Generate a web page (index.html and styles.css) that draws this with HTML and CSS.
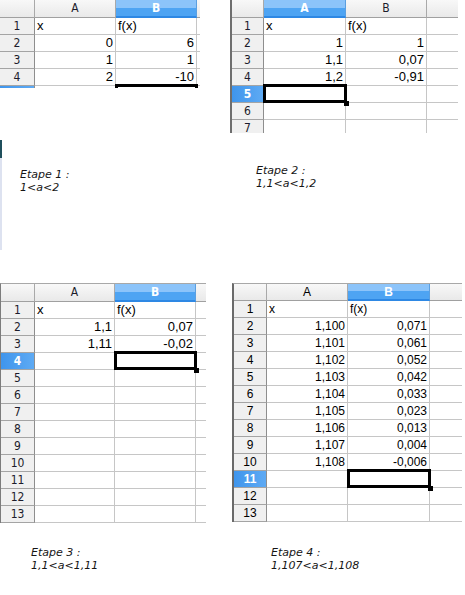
FILE: index.html
```html
<!doctype html>
<html lang="fr">
    <head>
        <meta charset="UTF-8" />
        <meta name="viewport" content="width=device-width, initial-scale=1.0" />
        <title>Dichotomie - étapes</title>
        <link rel="stylesheet" href="styles.css">
    </head>
    <body>
        <div class="board">
            <!-- Etape 1 -->
            <div class="panel">
                <div class="sheet sheet--one">
                    <div class="hd"></div><div class="hd">A</div><div class="hd hd--on">B</div><div class="hd"></div>
                    <div class="rh">1</div><div class="cell">x</div><div class="cell">f(x)</div><div class="cell"></div>
                    <div class="rh">2</div><div class="cell num">0</div><div class="cell num">6</div><div class="cell"></div>
                    <div class="rh">3</div><div class="cell num">1</div><div class="cell num">1</div><div class="cell"></div>
                    <div class="rh">4</div><div class="cell num">2</div><div class="cell num">-10</div><div class="cell"></div>
                    <div class="rh rh--on"></div><div class="cell"></div><div class="cell sel"></div><div class="cell"></div>
                </div>
                <div class="aside">
                    <span class="edge"></span>
                    <p class="note note--one">Etape 1 :<br>1&lt;a&lt;2</p>
                </div>
            </div>

            <!-- Etape 2 -->
            <div class="panel">
                <div class="sheet sheet--two">
                    <div class="hd"></div><div class="hd hd--on">A</div><div class="hd">B</div><div class="hd"></div>
                    <div class="rh">1</div><div class="cell">x</div><div class="cell">f(x)</div><div class="cell"></div>
                    <div class="rh">2</div><div class="cell num">1</div><div class="cell num">1</div><div class="cell"></div>
                    <div class="rh">3</div><div class="cell num">1,1</div><div class="cell num">0,07</div><div class="cell"></div>
                    <div class="rh">4</div><div class="cell num">1,2</div><div class="cell num">-0,91</div><div class="cell"></div>
                    <div class="rh rh--on">5</div><div class="cell sel"></div><div class="cell"></div><div class="cell"></div>
                    <div class="rh">6</div><div class="cell"></div><div class="cell"></div><div class="cell"></div>
                    <div class="rh">7</div><div class="cell"></div><div class="cell"></div><div class="cell"></div>
                </div>
                <p class="note note--two">Etape 2 :<br>1,1&lt;a&lt;1,2</p>
            </div>

            <!-- Etape 3 -->
            <div class="panel">
                <div class="sheet sheet--three">
                    <div class="hd"></div><div class="hd">A</div><div class="hd hd--on">B</div><div class="hd"></div>
                    <div class="rh">1</div><div class="cell">x</div><div class="cell">f(x)</div><div class="cell"></div>
                    <div class="rh">2</div><div class="cell num">1,1</div><div class="cell num">0,07</div><div class="cell"></div>
                    <div class="rh">3</div><div class="cell num">1,11</div><div class="cell num">-0,02</div><div class="cell"></div>
                    <div class="rh rh--on">4</div><div class="cell"></div><div class="cell sel"></div><div class="cell"></div>
                    <div class="rh">5</div><div class="cell"></div><div class="cell"></div><div class="cell"></div>
                    <div class="rh">6</div><div class="cell"></div><div class="cell"></div><div class="cell"></div>
                    <div class="rh">7</div><div class="cell"></div><div class="cell"></div><div class="cell"></div>
                    <div class="rh">8</div><div class="cell"></div><div class="cell"></div><div class="cell"></div>
                    <div class="rh">9</div><div class="cell"></div><div class="cell"></div><div class="cell"></div>
                    <div class="rh">10</div><div class="cell"></div><div class="cell"></div><div class="cell"></div>
                    <div class="rh">11</div><div class="cell"></div><div class="cell"></div><div class="cell"></div>
                    <div class="rh">12</div><div class="cell"></div><div class="cell"></div><div class="cell"></div>
                    <div class="rh">13</div><div class="cell"></div><div class="cell"></div><div class="cell"></div>
                </div>
                <p class="note note--three">Etape 3 :<br>1,1&lt;a&lt;1,11</p>
            </div>

            <!-- Etape 4 -->
            <div class="panel">
                <div class="sheet sheet--four">
                    <div class="hd"></div><div class="hd">A</div><div class="hd hd--on">B</div><div class="hd"></div>
                    <div class="rh">1</div><div class="cell">x</div><div class="cell">f(x)</div><div class="cell"></div>
                    <div class="rh">2</div><div class="cell num">1,100</div><div class="cell num">0,071</div><div class="cell"></div>
                    <div class="rh">3</div><div class="cell num">1,101</div><div class="cell num">0,061</div><div class="cell"></div>
                    <div class="rh">4</div><div class="cell num">1,102</div><div class="cell num">0,052</div><div class="cell"></div>
                    <div class="rh">5</div><div class="cell num">1,103</div><div class="cell num">0,042</div><div class="cell"></div>
                    <div class="rh">6</div><div class="cell num">1,104</div><div class="cell num">0,033</div><div class="cell"></div>
                    <div class="rh">7</div><div class="cell num">1,105</div><div class="cell num">0,023</div><div class="cell"></div>
                    <div class="rh">8</div><div class="cell num">1,106</div><div class="cell num">0,013</div><div class="cell"></div>
                    <div class="rh">9</div><div class="cell num">1,107</div><div class="cell num">0,004</div><div class="cell"></div>
                    <div class="rh">10</div><div class="cell num">1,108</div><div class="cell num">-0,006</div><div class="cell"></div>
                    <div class="rh rh--on">11</div><div class="cell"></div><div class="cell sel"></div><div class="cell"></div>
                    <div class="rh">12</div><div class="cell"></div><div class="cell"></div><div class="cell"></div>
                    <div class="rh">13</div><div class="cell"></div><div class="cell"></div><div class="cell"></div>
                </div>
                <p class="note note--four">Etape 4 :<br>1,107&lt;a&lt;1,108</p>
            </div>
        </div>
    </body>
</html>
```

FILE: styles.css
```css
body {
    margin: 0;
    background: #fff;
}
.board {
    display: grid;
    grid-template-columns: 230px 235px;
    grid-template-rows: 283px 312px;
}
.panel {
    display: flex;
    flex-direction: column;
    align-items: flex-start;
}

/* spreadsheet grid */
.sheet {
    display: grid;
    grid-template-rows: 18px;
    grid-auto-rows: 17px;
    overflow: hidden;
    font-family: "Liberation Sans", Arial, sans-serif;
    font-size: 13px;
    color: #000;
}
.sheet > div {
    box-sizing: border-box;
    border-right: 1px solid #c6c6c6;
    border-bottom: 1px solid #c6c6c6;
    white-space: nowrap;
    line-height: 16px;
}
.cell {
    padding: 0 2px;
}
.num {
    text-align: right;
}
.sel {
    position: relative;
}
.sel::after {
    content: "";
    position: absolute;
    top: -2px;
    left: -1px;
    right: -2px;
    bottom: -1px;
    border: 3px solid #000;
}
.sel::before {
    content: "";
    position: absolute;
    right: -4px;
    bottom: -4px;
    width: 5px;
    height: 5px;
    background: #000;
}

/* headers */
.hd,
.rh {
    font-family: "DejaVu Sans", Tahoma, sans-serif;
    font-stretch: condensed;
    font-size: 12px;
    color: #1c1c2c;
    text-align: center;
}
.sheet > .hd {
    background: linear-gradient(#f8f8f8, #e9e9e9);
    border-right-color: #a9a9a9;
    border-bottom-color: #a0a0a0;
    line-height: 17px;
}
.sheet > .rh {
    background: #f0f0f0;
    border-right-color: #8e8e8e;
    border-bottom-color: #a4a4a4;
}

/* each capture */
.sheet--one {
    width: 200px;
    height: 88px;
    grid-template-columns: 35px 81px 81px 40px;
}
.sheet--two {
    width: 226px;
    height: 133px;
    border-left: 2px solid #6e6e6e;
    grid-template-columns: 32px 82px 81px 40px;
}
.sheet--three {
    width: 205px;
    border-left: 1px solid #7c7c7c;
    border-top: 1px solid #a8a8a8;
    grid-template-columns: 34px 80px 81px 40px;
}
.sheet--four {
    width: 228px;
    margin-left: 2px;
    border-left: 2px solid #6a6a6a;
    border-top: 1px solid #a8a8a8;
    grid-template-rows: 17px;
    grid-template-columns: 33px 81px 82px 40px;
    font-size: 12px;
}
.sheet--four .hd,
.sheet--four .rh {
    font-family: "Liberation Sans", Arial, sans-serif;
    font-stretch: normal;
    color: #000;
}
.sheet--four > .hd {
    line-height: 16px;
}

/* selected column / row headers */
.sheet > .hd.hd--on {
    background: linear-gradient(#8cc4fa 0 50%, #4ea4f3 50% 100%);
    border-bottom: 2px solid #2e88e4;
    border-right-color: #5b9fe0;
    color: #fff;
    font-weight: bold;
}
.sheet > .rh.rh--on {
    background: linear-gradient(to right, #3f95ec, #5eaaf4);
    color: #fff;
    font-weight: bold;
}

/* captions */
.aside {
    display: flex;
    align-items: flex-start;
}
.edge {
    width: 2px;
    height: 110px;
    margin-top: 52px;
    background: linear-gradient(#1f4f5c 0 18px, #dde2f0 18px);
}
.note {
    margin: 0;
    font-family: "DejaVu Sans", Verdana, sans-serif;
    font-style: italic;
    font-size: 11px;
    line-height: 13px;
    color: #151515;
}
.note--one {
    margin-top: 80px;
    margin-left: 18px;
}
.note--two {
    margin-top: 31px;
    padding-left: 26px;
}
.note--three {
    margin-top: 23px;
    padding-left: 31px;
}
.note--four {
    margin-top: 24px;
    padding-left: 41px;
}
```
